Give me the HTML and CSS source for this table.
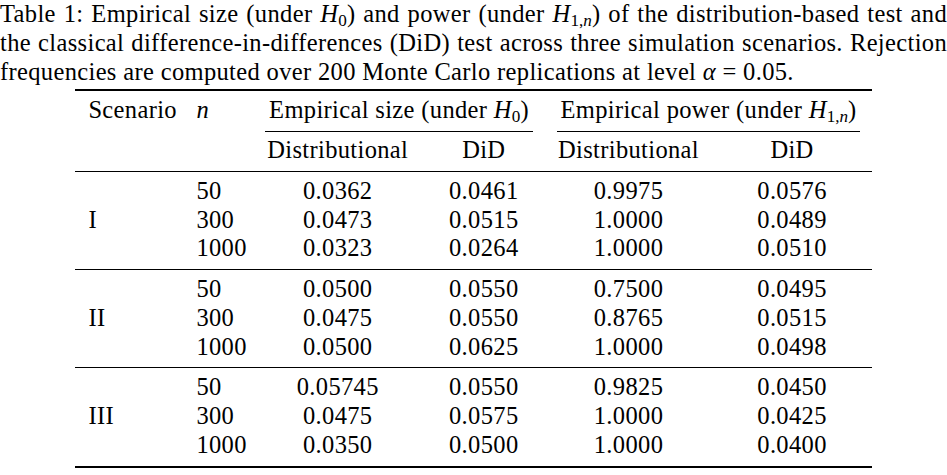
FILE: index.html
```html
<!DOCTYPE html>
<html lang="en">
<head>
<meta charset="utf-8">
<title>Table 1</title>
<link rel="stylesheet" href="styles.css">
</head>
<body>
<div class="page">
  <p class="caption">
    <span class="ln">Table 1: Empirical size (under <i>H</i><sub>0</sub>) and power (under <i>H</i><sub>1,<i>n</i></sub>) of the distribution-based test and</span>
    <span class="ln">the classical difference-in-differences (DiD) test across three simulation scenarios. Rejection</span>
    <span class="ln last">frequencies are computed over 200 Monte Carlo replications at level <i>α</i> = 0.05.</span>
  </p>
  <table class="results">
    <colgroup>
      <col class="c1"><col class="c2"><col class="c3"><col class="c4"><col class="c5"><col class="c6">
    </colgroup>
    <thead>
      <tr class="h1">
        <th class="lft">Scenario</th>
        <th class="lft"><i>n</i></th>
        <th class="grp" colspan="2"><div class="gtitle">Empirical size (under <i>H</i><sub>0</sub>)</div></th>
        <th class="grp" colspan="2"><div class="gtitle">Empirical power (under <i>H</i><sub>1,<i>n</i></sub>)</div></th>
      </tr>
      <tr class="h2">
        <th></th>
        <th></th>
        <th>Distributional</th>
        <th>DiD</th>
        <th>Distributional</th>
        <th>DiD</th>
      </tr>
    </thead>
    <tbody>
      <tr><td class="lft"></td><td class="lft">50</td><td>0.0362</td><td>0.0461</td><td>0.9975</td><td>0.0576</td></tr>
      <tr><td class="lft">I</td><td class="lft">300</td><td>0.0473</td><td>0.0515</td><td>1.0000</td><td>0.0489</td></tr>
      <tr><td class="lft"></td><td class="lft">1000</td><td>0.0323</td><td>0.0264</td><td>1.0000</td><td>0.0510</td></tr>
    </tbody>
    <tbody>
      <tr><td class="lft"></td><td class="lft">50</td><td>0.0500</td><td>0.0550</td><td>0.7500</td><td>0.0495</td></tr>
      <tr><td class="lft">II</td><td class="lft">300</td><td>0.0475</td><td>0.0550</td><td>0.8765</td><td>0.0515</td></tr>
      <tr><td class="lft"></td><td class="lft">1000</td><td>0.0500</td><td>0.0625</td><td>1.0000</td><td>0.0498</td></tr>
    </tbody>
    <tbody class="final">
      <tr><td class="lft"></td><td class="lft">50</td><td>0.05745</td><td>0.0550</td><td>0.9825</td><td>0.0450</td></tr>
      <tr><td class="lft">III</td><td class="lft">300</td><td>0.0475</td><td>0.0575</td><td>1.0000</td><td>0.0425</td></tr>
      <tr><td class="lft"></td><td class="lft">1000</td><td>0.0350</td><td>0.0500</td><td>1.0000</td><td>0.0400</td></tr>
    </tbody>
  </table>
</div>
</body>
</html>
```

FILE: styles.css
```css
html, body {
  margin: 0;
  padding: 0;
  background: #ffffff;
}

body {
  font-family: "Liberation Serif", serif;
  font-size: 24.5px;
  letter-spacing: 0.35px;
  color: #000000;
}

.page {
  width: 947px;
}

.caption {
  margin: 0;
  line-height: 28.8px;
}

.caption .ln {
  display: block;
  text-align: justify;
  text-align-last: justify;
  white-space: nowrap;
}

.caption .ln.last {
  text-align-last: left;
}

sub {
  font-size: 0.7em;
  line-height: 0;
  vertical-align: -0.25em;
  letter-spacing: 0;
}

.eq {
  padding: 0 3px;
}

.results {
  margin: 2.6px 0 0 75px;
  width: 797px;
  table-layout: fixed;
  border-collapse: separate;
  border-spacing: 0;
}

.c1 { width: 108px; }
.c2 { width: 70px; }
.c3 { width: 169.5px; }
.c4 { width: 122.5px; }
.c5 { width: 167px; }
.c6 { width: 160px; }

.results th,
.results td {
  font-weight: normal;
  line-height: 28.8px;
  padding: 0 4px;
  text-align: center;
  white-space: nowrap;
}

.results .lft {
  text-align: left;
  padding-left: 13.4px;
  padding-right: 0;
}

.results .h1 th {
  border-top: 2px solid #000;
  padding-top: 4.7px;
  padding-bottom: 0;
  vertical-align: top;
}

.results .h1 th.grp {
  padding-left: 12px;
  padding-right: 12px;
}

.gtitle {
  border-bottom: 1px solid #000;
  padding-bottom: 6.1px;
}

.results .h2 th {
  padding-top: 4.7px;
  padding-bottom: 6.1px;
}

.results tbody tr:first-child td {
  border-top: 1px solid #000;
  padding-top: 4.7px;
}

.results tbody tr:last-child td {
  padding-bottom: 6.1px;
}

.results tbody.final tr:last-child td {
  border-bottom: 2px solid #000;
}
```
